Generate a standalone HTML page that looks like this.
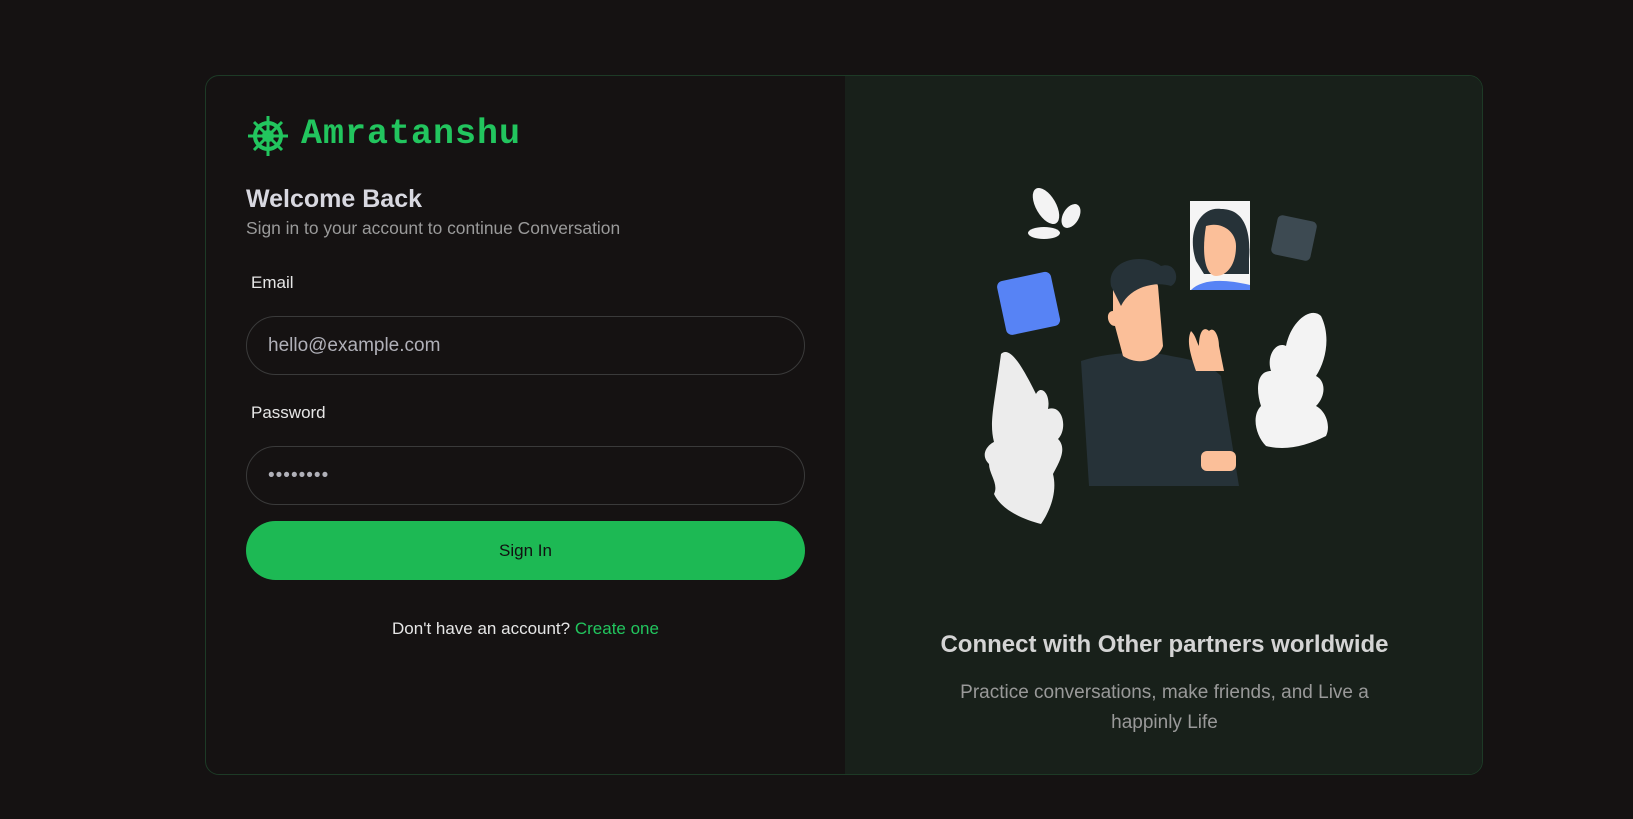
<!DOCTYPE html>
<html><head><meta charset="utf-8"><style>
*{box-sizing:border-box;margin:0;padding:0}
body{width:1633px;height:819px;background:#151212;font-family:"Liberation Sans",sans-serif;position:relative;overflow:hidden}
.card{position:absolute;left:205px;top:75px;width:1278px;height:700px;border:1px solid #1d3a26;border-radius:14px;overflow:hidden;background:#151212}
.right{position:absolute;left:639px;top:0;width:639px;height:700px;background:#18201a}
.a{position:absolute}
.logo{left:42px;top:39px}
.brand{left:95px;top:38px;font-family:"Liberation Mono",monospace;font-size:35px;color:#22c55e;font-weight:bold;letter-spacing:1px}
h1{position:absolute;left:40px;top:109px;font-size:25px;color:#d8d8e0;font-weight:bold}
.sub{left:40px;top:142px;font-size:17.4px;color:#9a9a9a}
.lbl{font-size:17px;color:#e6e6e6;left:45px}
.inp{left:40px;width:559px;height:59px;border:1px solid #3a3a3a;border-radius:30px;padding-left:21px;font-size:19px;color:#b0b0b8;line-height:57px}
.btn{left:40px;top:445px;width:559px;height:59px;border-radius:30px;background:#1db954;color:#111;font-size:17px;text-align:center;line-height:59px}
.su{left:0;width:639px;top:543px;text-align:center;font-size:17px;color:#e6e6e6}
.su span{color:#22c55e}
.rh{left:0;width:639px;top:555px;text-align:center;font-size:24px;font-weight:bold;color:#d4d4d4}
.rp{left:90px;width:459px;top:602px;text-align:center;font-size:19px;color:#999;line-height:30px}
</style></head><body>
<div class="card">
<svg class="a logo" width="40" height="42" viewBox="0 0 40 42"><g stroke="#22c55e" fill="none" stroke-width="4"><circle cx="20" cy="21" r="13"/><circle cx="20" cy="21" r="4"/></g><g stroke="#22c55e" stroke-width="3"><line x1="20" y1="1" x2="20" y2="41"/><line x1="0" y1="21" x2="40" y2="21"/><line x1="6" y1="7" x2="34" y2="35"/><line x1="34" y1="7" x2="6" y2="35"/></g></svg>
<div class="a brand">Amratanshu</div>
<h1>Welcome Back</h1>
<div class="a sub">Sign in to your account to continue Conversation</div>
<div class="a lbl" style="top:197px">Email</div>
<div class="a inp" style="top:240px">hello@example.com</div>
<div class="a lbl" style="top:327px">Password</div>
<div class="a inp" style="top:370px;letter-spacing:1px">••••••••</div>
<div class="a btn">Sign In</div>
<div class="a su">Don't have an account? <span>Create one</span></div>
<div class="right">
<svg class="a" style="left:116px;top:85px" width="380" height="380" viewBox="960 160 380 380">
<path d="M1000 353c10-10 25 20 35 40 5-10 15 0 12 15 15-5 20 20 10 30 10 10 0 25-5 35 5 20-5 40-12 50-20-5-40-15-47-30 5-10-5-20-5-30-10-10 0-20 5-22-5-20 0-35 7-88z" fill="#ececec"/>
<path d="M1320 315c-10-10-30 5-35 30-10-5-20 10-15 25-15 0-15 20-10 35-10 10-5 30 5 40 20 5 40 0 60-10 5-10 0-25-10-30 10-10 10-25 0-30 10-15 15-40 5-60z" fill="#f3f3f3"/>
<ellipse cx="1045" cy="205" rx="10" ry="20" transform="rotate(-30 1045 205)" fill="#f3f3f3"/>
<ellipse cx="1070" cy="215" rx="8" ry="13" transform="rotate(30 1070 215)" fill="#f3f3f3"/>
<ellipse cx="1043" cy="232" rx="16" ry="6" fill="#f3f3f3"/>
<rect x="1000" y="275" width="55" height="55" rx="6" transform="rotate(-12 1027 302)" fill="#5783f5"/>
<rect x="1273" y="217" width="40" height="40" rx="5" transform="rotate(12 1293 237)" fill="#3d4a52"/>
<rect x="1189" y="200" width="60" height="89" fill="#f5f5f5"/>
<path d="M1195 260c-10-30 5-55 25-52 25 0 30 25 28 50v15h-45z" fill="#263238"/>
<path d="M1205 225c15-5 30 5 30 20 0 20-10 30-20 30s-15-20-10-50z" fill="#fbbf99"/>
<path d="M1190 289c10-10 30-12 59-5v5z" fill="#5783f5"/>
<path d="M1080 360c30-10 70-10 90-5 30 5 40 10 50 20l18 110h-150z" fill="#263238"/>
<path d="M1112 275c15-15 40-10 45 10l5 60c-5 15-25 20-40 10l-8-30c-8 0-10-15-2-15z" fill="#fbbf99"/>
<path d="M1110 285c-5-25 30-35 50-20 15-5 20 15 10 20-15-5-40 0-50 20z" fill="#263238"/>
<path d="M1195 370c-5-15-10-30-5-40 5 5 5 10 8 15 0-15 5-20 10-15 5-5 10 5 10 15l5 25z" fill="#fbbf99"/>
<rect x="1200" y="450" width="35" height="20" rx="6" fill="#fbbf99"/>
</svg>
<div class="a rh">Connect with Other partners worldwide</div>
<div class="a rp">Practice conversations, make friends, and Live a happinly Life</div>
</div>
</div>
</body></html>
